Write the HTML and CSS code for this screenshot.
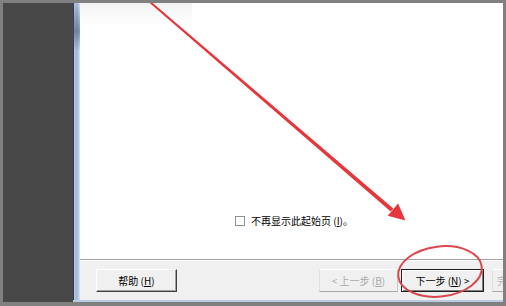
FILE: index.html
```html
<!DOCTYPE html>
<html lang="zh-CN">
<head>
<meta charset="utf-8">
<link rel="stylesheet" href="styles.css">
</head>
<body>
<div class="screen">
  <div class="dark"></div>
  <div class="win">
    <div class="win-body">
      <div class="frame-strip"></div>
      <div class="dialog">
        <div class="content">
          <div class="shade"></div>
          <div class="check-row">
            <span class="checkbox"></span>
            <span class="label">不再显示此起始页 (<u>I</u>)。</span>
          </div>
        </div>
        <div class="sep"></div>
        <div class="footer">
          <div class="btn btn-help">帮助 (<u>H</u>)</div>
          <div class="btn btn-back">&lt; 上一步 (<u>B</u>)</div>
          <div class="btn btn-next">下一步 (<u>N</u>) &gt;</div>
          <div class="btn btn-finish">完成</div>
        </div>
      </div>
    </div>
    <div class="frame-bottom"></div>
  </div>
  <svg class="marks" width="506" height="306" viewBox="0 0 506 306">
    <polygon points="150.6,1.2 149.4,2.8 390.7,211.5 393.3,208.5" fill="#e5363b"/>
    <polygon points="398.1,203.5 405.5,220.5 387.7,215.7" fill="#e5363b"/>
    <ellipse cx="440" cy="271.5" rx="42" ry="25" transform="rotate(-7 440 271.5)" fill="none" stroke="#d9474c" stroke-width="2"/>
  </svg>
</div>
</body>
</html>
```

FILE: styles.css
```css
html, body {
  margin: 0;
  padding: 0;
  background: #808080;
}
.screen {
  position: relative;
  width: 506px;
  height: 306px;
  box-sizing: border-box;
  border: 3px solid #808080;
  border-bottom-width: 4px;
  display: flex;
  overflow: hidden;
  font-family: "Noto Sans CJK SC", "Liberation Sans", sans-serif;
  font-size: 10px;
  color: #000;
}
.dark {
  width: 70px;
  flex: none;
  background: #484848;
}
.win {
  flex: 1;
  display: flex;
  flex-direction: column;
  min-width: 0;
}
.win-body {
  flex: 1;
  display: flex;
  min-height: 0;
}
.frame-strip {
  width: 7px;
  flex: none;
  background:
    linear-gradient(to bottom, rgba(60,80,110,0) 0px, rgba(60,80,110,0.55) 28px, rgba(60,80,110,0) 48px),
    linear-gradient(to right, #2f3b50 0px, #2f3b50 1px, #b7cae4 1px, #9fb6d6 4px, #c6d6ec 6px, #dde7f4 7px);
}
.frame-bottom {
  height: 2px;
  flex: none;
  background: #b9cbe3;
}
.dialog {
  flex: 1;
  display: flex;
  flex-direction: column;
  min-width: 0;
  overflow: hidden;
}
.content {
  height: 256px;
  flex: none;
  background: #ffffff;
  display: flex;
  flex-direction: column;
  justify-content: space-between;
}
.shade {
  width: 112px;
  height: 22px;
  background: linear-gradient(to bottom, #f2f2f2, #ffffff);
}
.check-row {
  display: flex;
  align-items: center;
  gap: 6px;
  padding-left: 155px;
  margin-bottom: 31px;
  height: 14px;
}
.checkbox {
  width: 8px;
  height: 8px;
  border: 1px solid #8e8f8f;
  background: #fff;
}
.label {
  line-height: 14px;
  white-space: nowrap;
}
.sep {
  height: 1px;
  flex: none;
  background: #a0a0a0;
}
.footer {
  flex: 1;
  background: #f0f0f0;
  border-top: 1px solid #ffffff;
  display: flex;
  align-items: center;
  padding-left: 16px;
}
.btn {
  flex: none;
  height: 23px;
  box-sizing: border-box;
  display: flex;
  align-items: center;
  justify-content: center;
  white-space: nowrap;
  background: #f0f0f0;
  border: 1px solid;
  border-color: #ffffff #404040 #404040 #ffffff;
  box-shadow: inset -1px -1px 0 #a0a0a0;
}
.btn-help {
  width: 81px;
}
.btn-back {
  width: 79px;
  margin-left: 142px;
  color: #a8a8a8;
  border-color: #ffffff #c8c8c8 #a8a8a8 #e0e0e0;
  box-shadow: none;
}
.btn-next {
  width: 83px;
  margin-left: 3px;
  border: 1px solid #1e1e1e;
  box-shadow: inset 1px 1px 0 #ffffff, inset -1px -1px 0 #808080;
}
.btn-finish {
  width: 40px;
  margin-left: 8px;
  justify-content: flex-start;
  padding-left: 4px;
  color: #b4b4b4;
  border-color: #ffffff #c8c8c8 #a8a8a8 #e0e0e0;
  box-shadow: none;
}
.btn u {
  text-decoration: underline;
}
.marks {
  position: absolute;
  left: -3px;
  top: -3px;
  pointer-events: none;
}
```
